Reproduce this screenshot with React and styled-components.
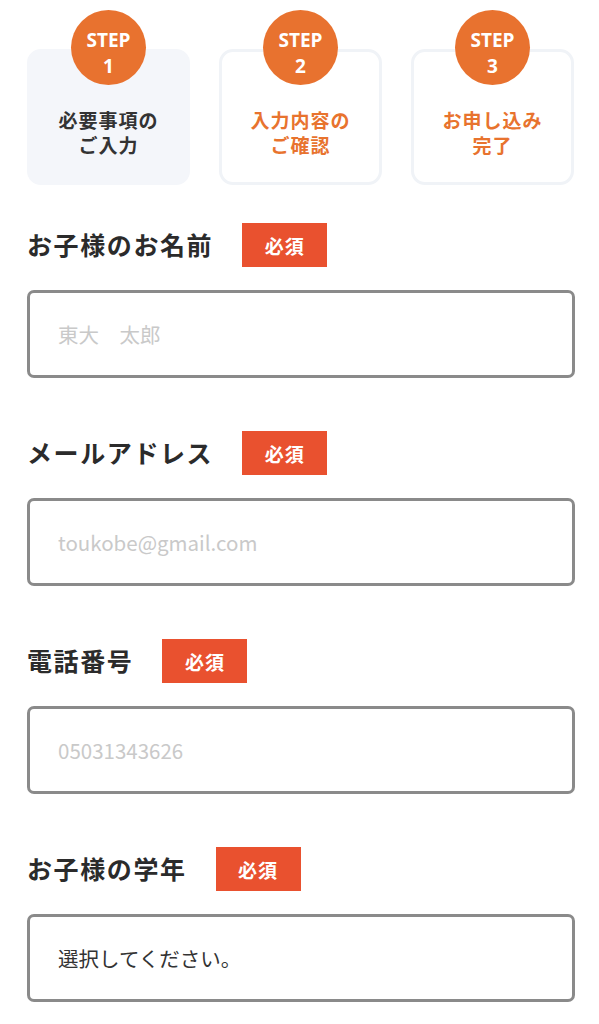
import React from "react";
import styled, { createGlobalStyle } from "styled-components";

const steps = [
  { no: 1, lines: ["必要事項の", "ご入力"], active: true },
  { no: 2, lines: ["入力内容の", "ご確認"], active: false },
  { no: 3, lines: ["お申し込み", "完了"], active: false },
];

const fields = [
  { label: "お子様のお名前", placeholder: "東大　太郎", type: "text" },
  { label: "メールアドレス", placeholder: "toukobe@gmail.com", type: "email" },
  { label: "電話番号", placeholder: "05031343626", type: "tel" },
];

const App = () => {
  return (
    <Page>
      <GlobalStyle />
      <StepList>
        {steps.map((step) => (
          <Step key={step.no}>
            <StepCircle>
              <span>STEP</span>
              <span>{step.no}</span>
            </StepCircle>
            <StepCard $active={step.active}>
              {step.lines.map((line) => (
                <span key={line}>{line}</span>
              ))}
            </StepCard>
          </Step>
        ))}
      </StepList>
      <Form>
        {fields.map((field) => (
          <Field key={field.label}>
            <FieldHead>
              <Label>{field.label}</Label>
              <Required>必須</Required>
            </FieldHead>
            <TextInput type={field.type} placeholder={field.placeholder} />
          </Field>
        ))}
        <Field>
          <FieldHead>
            <Label>お子様の学年</Label>
            <Required>必須</Required>
          </FieldHead>
          <Select defaultValue="">
            <option value="">選択してください。</option>
            <option value="1">小学1年生</option>
            <option value="2">小学2年生</option>
            <option value="3">小学3年生</option>
          </Select>
        </Field>
      </Form>
    </Page>
  );
};

export default App;

const GlobalStyle = createGlobalStyle`
  * {
    box-sizing: border-box;
  }
  body {
    margin: 0;
    background: #ffffff;
    font-family: "Noto Sans CJK JP", "Noto Sans", sans-serif;
    color: #333333;
  }
`;

const Page = styled.div`
  width: 100%;
  padding: 10px 24px 0 27px;
`;

const StepList = styled.div`
  display: grid;
  grid-template-columns: repeat(3, 1fr);
  gap: 29px;
  padding-right: 1px;
`;

const Step = styled.div`
  display: flex;
  flex-direction: column;
  align-items: center;
`;

const StepCircle = styled.div`
  position: relative;
  z-index: 1;
  width: 75px;
  height: 75px;
  border-radius: 50%;
  background: #e8722f;
  color: #ffffff;
  display: flex;
  flex-direction: column;
  align-items: center;
  justify-content: center;
  font-family: "Open Sans", "Noto Sans", sans-serif;
  font-weight: 700;
  font-size: 19px;
  line-height: 26px;
  padding-top: 11px;
`;

const StepCard = styled.div`
  width: 100%;
  height: 136px;
  margin-top: -36px;
  padding-top: 29px;
  border-radius: 14px;
  background: ${({ $active }) => ($active ? "#f4f6fa" : "#ffffff")};
  border: 3px solid ${({ $active }) => ($active ? "#f4f6fa" : "#f0f3f7")};
  color: ${({ $active }) => ($active ? "#333333" : "#e8732e")};
  display: flex;
  flex-direction: column;
  align-items: center;
  justify-content: center;
  font-size: 19px;
  font-weight: 700;
  line-height: 25px;
  letter-spacing: 1px;
`;

const Form = styled.div`
  display: flex;
  flex-direction: column;
  gap: 53px;
  margin-top: 38px;
`;

const Field = styled.div`
  display: flex;
  flex-direction: column;
  gap: 23px;
`;

const FieldHead = styled.div`
  display: flex;
  align-items: center;
  height: 44px;
`;

const Label = styled.div`
  font-size: 25px;
  font-weight: 700;
  letter-spacing: 1.6px;
  color: #2b2b2b;
  margin-right: 29px;
  margin-top: -3px;
`;

const Required = styled.div`
  width: 85px;
  height: 44px;
  background: #e9512f;
  color: #ffffff;
  display: flex;
  align-items: center;
  justify-content: center;
  font-size: 19px;
  font-weight: 700;
  letter-spacing: 1px;
`;

const TextInput = styled.input`
  width: 100%;
  height: 88px;
  border: 3px solid #8a8a8a;
  border-radius: 7px;
  padding: 0 28px;
  font-family: inherit;
  font-size: 20.5px;
  color: #333333;
  background: #ffffff;
  outline: none;
  &::placeholder {
    color: #c9c9c9;
  }
`;

const Select = styled.select`
  width: 100%;
  height: 88px;
  border: 3px solid #8a8a8a;
  border-radius: 7px;
  padding: 0 28px;
  font-family: inherit;
  font-size: 20.5px;
  color: #333333;
  background: #ffffff;
  outline: none;
  appearance: none;
  -webkit-appearance: none;
`;
